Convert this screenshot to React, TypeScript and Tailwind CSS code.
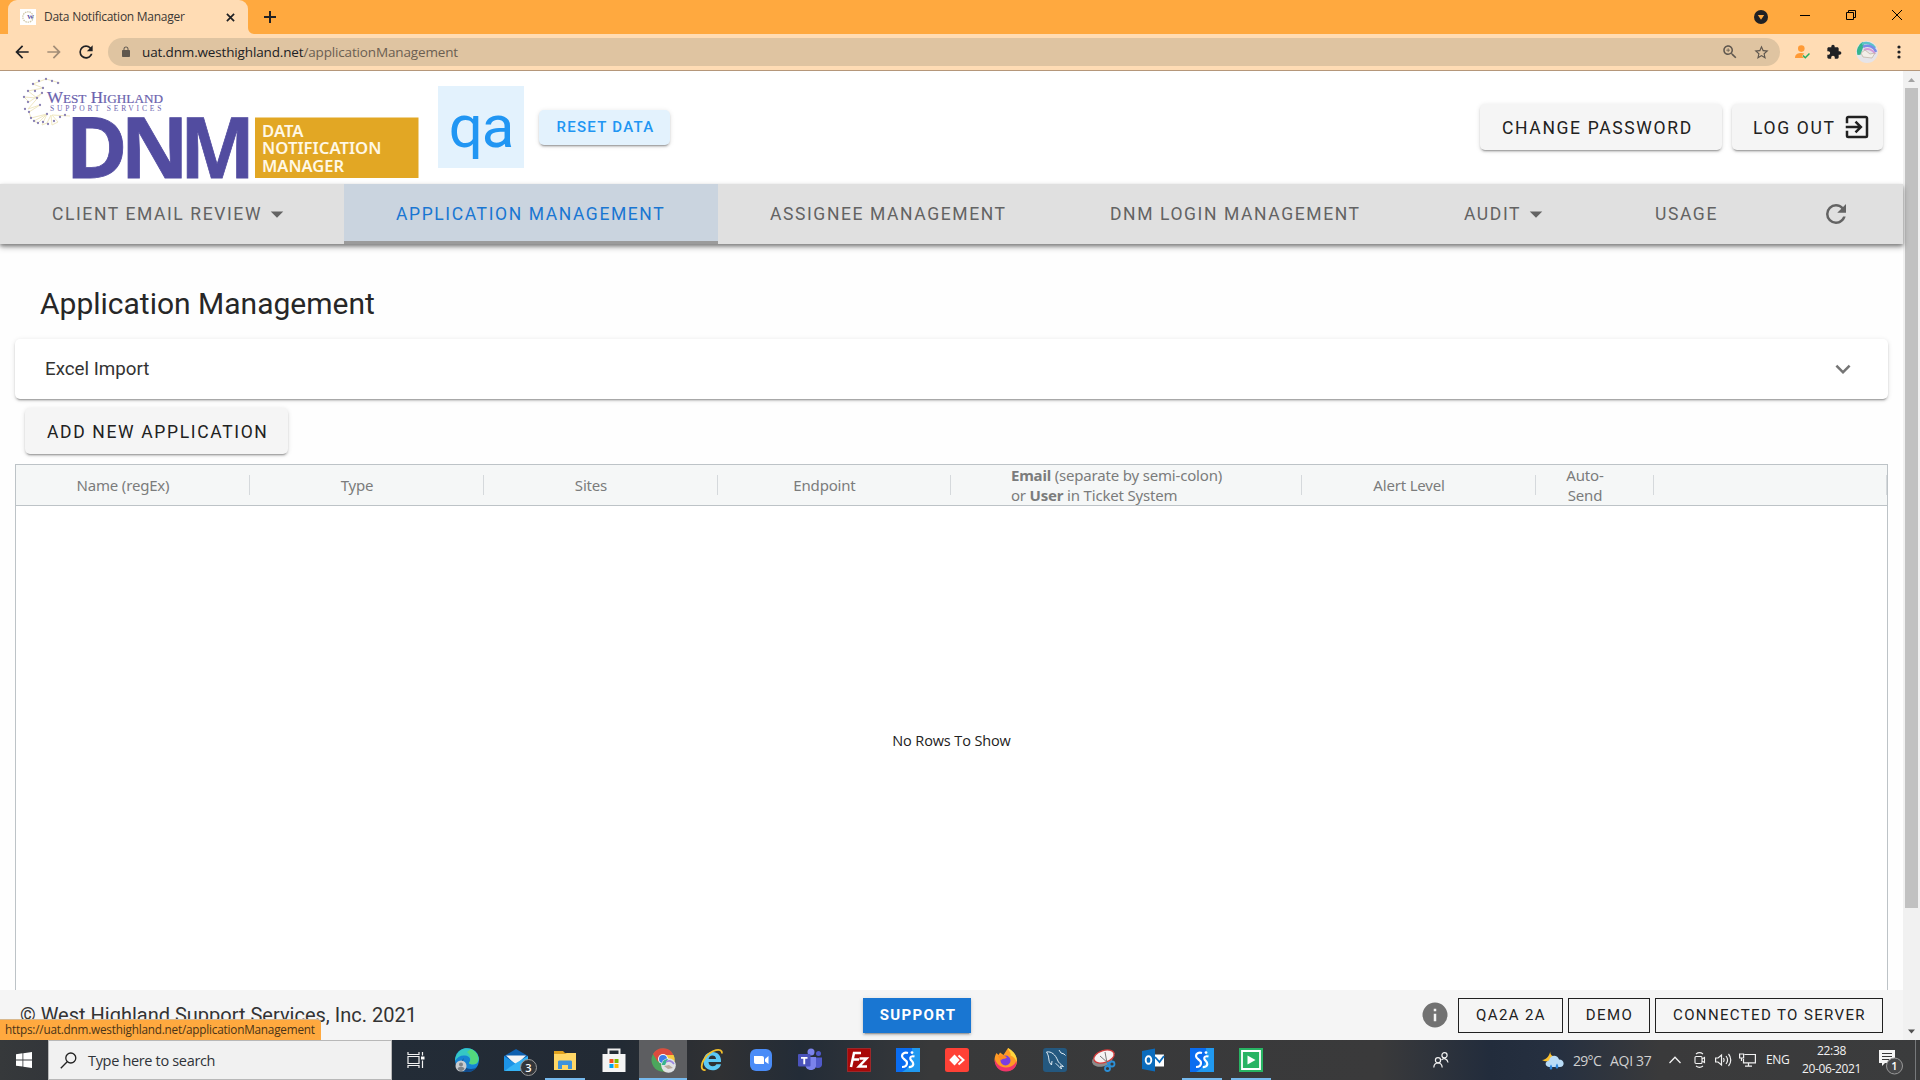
import React from "react";
import type { ReactNode } from "react";

const PATHS = {
  back: "M20 11H7.83l5.59-5.59L12 4l-8 8 8 8 1.41-1.41L7.83 13H20v-2z",
  forward: "M12 4l-1.41 1.41L16.17 11H4v2h12.17l-5.58 5.59L12 20l8-8z",
  refresh:
    "M17.65,6.35C16.2,4.9 14.21,4 12,4A8,8 0 0,0 4,12A8,8 0 0,0 12,20C15.73,20 18.84,17.45 19.73,14H17.65C16.83,16.33 14.61,18 12,18A6,6 0 0,1 6,12A6,6 0 0,1 12,6C13.66,6 15.14,6.69 16.22,7.78L13,11H20V4L17.65,6.35Z",
  lock: "M18 8h-1V6c0-2.76-2.24-5-5-5S7 3.24 7 6v2H6c-1.1 0-2 .9-2 2v10c0 1.1.9 2 2 2h12c1.1 0 2-.9 2-2V10c0-1.1-.9-2-2-2zM8.9 6c0-1.71 1.39-3.1 3.1-3.1s3.1 1.39 3.1 3.1v2H8.9V6z",
  zoomIn:
    "M15.5 14h-.79l-.28-.27C15.41 12.59 16 11.11 16 9.5 16 5.91 13.09 3 9.5 3S3 5.91 3 9.5 5.91 16 9.5 16c1.61 0 3.09-.59 4.23-1.57l.27.28v.79l5 4.99L20.49 19l-4.99-5zm-6 0C7.01 14 5 11.99 5 9.5S7.01 5 9.5 5 14 7.01 14 9.5 11.99 14 9.5 14zm2.5-4h-2v2H9v-2H7V9h2V7h1v2h2v1z",
  star: "M22 9.24l-7.19-.62L12 2 9.19 8.63 2 9.24l5.46 4.73L5.82 21 12 17.27 18.18 21l-1.63-7.03L22 9.24zM12 15.4l-3.76 2.27 1-4.28-3.32-2.88 4.38-.38L12 6.1l1.71 4.04 4.38.38-3.32 2.88 1 4.28L12 15.4z",
  puzzle:
    "M20.5 11H19V7c0-1.1-.9-2-2-2h-4V3.5C13 2.12 11.88 1 10.5 1S8 2.12 8 3.5V5H4c-1.1 0-1.99.9-1.99 2v3.8H3.5c1.49 0 2.7 1.21 2.7 2.7s-1.21 2.7-2.7 2.7H2V20c0 1.1.9 2 2 2h3.8v-1.5c0-1.49 1.21-2.7 2.7-2.7 1.49 0 2.7 1.21 2.7 2.7V22H17c1.1 0 2-.9 2-2v-4h1.5c1.38 0 2.5-1.12 2.5-2.5S21.88 11 20.5 11z",
  exit: "M19,3H5C3.89,3 3,3.89 3,5V9H5V5H19V19H5V15H3V19A2,2 0 0,0 5,21H19A2,2 0 0,0 21,19V5C21,3.89 20.1,3 19,3M10.08,15.58L11.5,17L16.5,12L11.5,7L10.08,8.41L12.67,11H3V13H12.67L10.08,15.58Z",
  caret: "M7,10L12,15L17,10H7Z",
  chevron: "M7.41,8.58L12,13.17L16.59,8.58L18,10L12,16L6,10L7.41,8.58Z",
  info: "M13,9H11V7H13M13,17H11V11H13M12,2A10,10 0 0,0 2,12A10,10 0 0,0 12,22A10,10 0 0,0 22,12A10,10 0 0,0 12,2Z",
};

function Icon({ name, className }: { name: keyof typeof PATHS; className: string }) {
  return (
    <svg viewBox="0 0 24 24" fill="currentColor" className={`shrink-0 ${className}`}>
      <path d={PATHS[name]} />
    </svg>
  );
}

const ELEVATION =
  "shadow-[0_3px_1px_-2px_rgba(0,0,0,.2),0_2px_2px_0_rgba(0,0,0,.14),0_1px_5px_0_rgba(0,0,0,.12)]";

/* ---------- Browser chrome ---------- */

function Favicon() {
  return (
    <svg viewBox="0 0 16 16" className="size-4 shrink-0 bg-white">
      <circle cx="8" cy="8" r="5.2" fill="none" stroke="#cfc7a8" strokeWidth="1.3" strokeDasharray="1.5 .8" />
      <text x="7" y="10.2" fontSize="7" fontWeight="700" fill="#5b52a3" fontFamily="Liberation Serif">W</text>
    </svg>
  );
}

function TabStrip() {
  return (
    <div className="flex h-[34px] items-end bg-[#ffa93f] pl-2">
      <div className="flex h-[34px] w-60 items-center rounded-t-[9px] bg-[#ffdcb4] pr-2.5 pl-3">
        <Favicon />
        <span className="ml-2 flex-1 font-['Open_Sans'] text-[12px] tracking-[-0.26px] whitespace-nowrap text-[#3c3835]">
          Data Notification Manager
        </span>
        <svg viewBox="0 0 10 10" className="mr-[3px] size-[9px] stroke-[#202124]" strokeWidth="1.9">
          <path d="M1 1l8 8M9 1L1 9" />
        </svg>
      </div>
      <svg viewBox="0 0 6 6" className="size-1.5 fill-[#ffdcb4]"><path d="M0 0a6 6 0 0 0 6 6H0z" /></svg>
      <svg viewBox="0 0 12 12" className="mb-[11px] ml-2.5 size-3 stroke-[#202124]" strokeWidth="2">
        <path d="M6 0v12M0 6h12" />
      </svg>
      <div className="ml-auto flex h-[34px] items-center text-black">
        <svg viewBox="0 0 14 14" className="mr-8 size-3.5">
          <circle cx="7" cy="7" r="7" fill="#202124" />
          <path d="M3.8 5h6.4L7 9.8z" fill="#ffa93f" />
        </svg>
        <svg viewBox="0 0 10 10" className="mb-[5px] mr-9 size-2.5 stroke-black"><path d="M0 5.5h10" /></svg>
        <svg viewBox="0 0 10 10" className="mb-[5px] mr-9 size-2.5 fill-none stroke-black">
          <path d="M.5 2.5h7v7h-7zM2.5 2.5v-2h7v7h-2" />
        </svg>
        <svg viewBox="0 0 10 10" className="mb-[5px] mr-[18px] size-2.5 stroke-black"><path d="M0 0l10 10M10 0L0 10" /></svg>
      </div>
    </div>
  );
}

function Toolbar() {
  return (
    <div className="flex h-[37px] items-center border-b border-[#b5977a] bg-[#ffdcb4] pl-3 text-[#202124]">
      <Icon name="back" className="size-5" />
      <Icon name="forward" className="ml-3 size-5 text-[#a28d77]" />
      <Icon name="refresh" className="ml-3 size-5" />
      <div className="ml-3 flex h-7 w-[1672px] items-center rounded-full bg-[#dfc4a1] pr-2.5 pl-3 text-[#5f574e]">
        <Icon name="lock" className="size-3" />
        <span className="ml-[10px] font-['Open_Sans'] text-[13.5px] tracking-[-0.15px] text-[#6b5f52]">
          <span className="text-[#202124]">uat.dnm.westhighland.net</span>/applicationManagement
        </span>
        <Icon name="zoomIn" className="ml-auto size-[18px]" />
        <Icon name="star" className="ml-3.5 size-[17px]" />
      </div>
      <svg viewBox="0 0 15 14" className="ml-[15px] h-3.5 w-[15px]">
        <circle cx="6.3" cy="3.6" r="3.3" fill="#ff9a35" />
        <path d="M0 13c0-4 3-5 6.500-5 1 0 2 .2 2.800.5L7 11l2 2z" fill="#ff9a35" />
        <path d="M8 10.500l2.300 2.300L14.500 8.500" fill="none" stroke="#27ae60" strokeWidth="1.500" />
      </svg>
      <Icon name="puzzle" className="ml-4 size-4" />
      <svg viewBox="0 0 22 22" className="mb-px ml-3.5 size-[22px]">
        <circle cx="11" cy="11" r="11" fill="#e6e4e8" />
        <path d="M1.500 14A11 11 0 0 1 7 .8l1 3-3.500 10z" fill="#35b48e" />
        <path d="M6 3a10 10 0 0 1 13 4" fill="none" stroke="#5cc3c9" strokeWidth="2.500" />
        <path d="M7 6a9 9 0 0 1 13 5" fill="none" stroke="#7b8be8" strokeWidth="2.500" />
        <path d="M8 9a8 8 0 0 1 11 4" fill="none" stroke="#d69ad8" strokeWidth="2" />
        <path d="M5 12l4-3 5 4 5-1-3 5-9-1z" fill="#f3eee8" stroke="#b5a696" strokeWidth=".6" />
      </svg>
      <svg viewBox="0 0 4 14" className="ml-[19px] h-3.5 w-1 fill-[#202124]">
        <circle cx="2" cy="2" r="1.600" /><circle cx="2" cy="7" r="1.600" /><circle cx="2" cy="12" r="1.600" />
      </svg>
    </div>
  );
}

/* ---------- Page ---------- */

const DOTS = [
  [39, 10], [46, 8], [52, 10], [58, 12], [33, 13], [28, 20], [24, 26], [28, 31], [37, 27], [43, 17], [42, 22],
  [25, 38], [29, 41], [40, 34], [31, 47], [34, 50], [38, 52], [43, 51], [48, 53], [54, 50], [60, 46], [65, 44], [47, 43], [35, 20],
];

function Logo() {
  return (
    <svg viewBox="0 0 420 113" className="h-[113px] w-[420px] shrink-0 overflow-visible">
      <path
        d="M60 12L46 8 33 13l10 4-15 3 9 7-13-1 5 5 13-9-14 16 12-4-11 7 2 6 16-4-13 7 4 2 9-9-5 11 5-2 4-8 1 10 6-3-6-7 18 1"
        fill="none" stroke="#f0e8c2" strokeWidth="1"
      />
      <g fill="#8a82b4">
        {DOTS.map(([x, y]) => <circle key={`${x}-${y}`} cx={x} cy={y} r="1.150" />)}
      </g>
      <g fill="#6b63ae" fontFamily="Liberation Serif">
        <text x="47" y="31.500" fontSize="16" stroke="#6b63ae" strokeWidth=".2" textLength="116" lengthAdjust="spacingAndGlyphs">
          W<tspan fontSize="12.500">EST</tspan> H<tspan fontSize="12.500">IGHLAND</tspan>
        </text>
        <text x="50" y="39.500" fontSize="7.500" letterSpacing="2.700" textLength="114">SUPPORT SERVICES</text>
      </g>
      <g fill="#524ca0" fontFamily="Open Sans" fontWeight="700" fontSize="84" stroke="#524ca0" strokeWidth=".8">
        <text x="65.500" y="107.300">D</text>
        <text x="120.500" y="107.300">N</text>
        <text x="180" y="107.300" textLength="75" lengthAdjust="spacingAndGlyphs">M</text>
      </g>
      <rect x="255" y="46.500" width="163.500" height="60.500" fill="#e2a724" />
      <g fill="#fff8e6" fontFamily="Noto Sans" fontWeight="600" fontSize="16.500">
        <text x="262" y="65.800" textLength="41.500" lengthAdjust="spacingAndGlyphs">DATA</text>
        <text x="262" y="83.300" textLength="119.500" lengthAdjust="spacingAndGlyphs">NOTIFICATION</text>
        <text x="262" y="101" textLength="82" lengthAdjust="spacingAndGlyphs">MANAGER</text>
      </g>
    </svg>
  );
}

function RaisedButton({ className, children }: { className: string; children: ReactNode }) {
  return (
    <button
      className={`flex h-[46px] items-center rounded-[5px] bg-[#f5f5f5] pt-0.5 text-[17.5px] tracking-[1.65px] whitespace-nowrap text-[#212121] ${ELEVATION} ${className}`}
    >
      {children}
    </button>
  );
}

function Header() {
  return (
    <header className="flex h-[113px] items-start bg-white">
      <Logo />
      <div className="mt-[15px] ml-[18px] flex h-[82px] w-[86px] items-center justify-center bg-[#e3f2fd] text-[60px] tracking-[-1px] text-[#2196f3]">
        qa
      </div>
      <button
        className={`mt-[39px] ml-[15px] h-[35px] w-[131px] rounded-[5px] bg-[#e3f2fd] pl-0.5 text-[15px] font-medium tracking-[1.3px] text-[#2196f3] ${ELEVATION}`}
      >
        RESET DATA
      </button>
      <div className="mt-[33px] mr-5 ml-auto flex gap-2.5">
        <RaisedButton className="w-[242px] pl-[22px]">CHANGE PASSWORD</RaisedButton>
        <RaisedButton className="w-[151px] pl-[21px]">
          LOG OUT
          <Icon name="exit" className="mb-0.5 ml-1.5 size-[30px]" />
        </RaisedButton>
      </div>
    </header>
  );
}

function NavItem({ className, children }: { className: string; children: ReactNode }) {
  return (
    <div className={`flex h-full shrink-0 items-center whitespace-nowrap ${className}`}>{children}</div>
  );
}

function Nav() {
  return (
    <nav className="relative z-10 flex h-[60px] bg-[#e0e0e0] text-[17.5px] tracking-[1.6px] text-[#636363] shadow-[0_3px_6px_rgba(0,0,0,.35),0_2px_3px_rgba(0,0,0,.25)]">
      <NavItem className="w-[344px] pl-[52px]">
        CLIENT EMAIL REVIEW
        <Icon name="caret" className="size-[30px]" />
      </NavItem>
      <NavItem className="w-[374px] border-b-[3px] border-[#9b9b9b] bg-[#cad4df] pt-[3px] pl-[52px] text-[#1976d2]">
        APPLICATION MANAGEMENT
      </NavItem>
      <NavItem className="w-[340px] pl-[52px]">ASSIGNEE MANAGEMENT</NavItem>
      <NavItem className="w-[354px] pl-[52px]">DNM LOGIN MANAGEMENT</NavItem>
      <NavItem className="w-[191px] pl-[52px]">
        AUDIT
        <Icon name="caret" className="size-[30px]" />
      </NavItem>
      <NavItem className="w-[167px] pl-[52px]">USAGE</NavItem>
      <NavItem className="pl-[51px]">
        <Icon name="refresh" className="size-[30px]" />
      </NavItem>
    </nav>
  );
}

const COLUMNS: { id: string; className: string; label: ReactNode }[] = [
  { id: "name", className: "w-[234px]", label: "Name (regEx)" },
  { id: "type", className: "w-[234px]", label: "Type" },
  { id: "sites", className: "w-[234px]", label: "Sites" },
  { id: "endpoint", className: "w-[233px]", label: "Endpoint" },
  {
    id: "email",
    className: "w-[351px]",
    label: (
      <>
        <b>Email</b> (separate by semi-colon)
        <br />
        or <b>User</b> in Ticket System
      </>
    ),
  },
  { id: "alert", className: "w-[234px]", label: "Alert Level" },
  { id: "auto", className: "w-[118px]", label: <span className="block text-center">Auto-<br />Send</span> },
  { id: "actions", className: "w-[233px]", label: "" },
];

function ApplicationsGrid() {
  return (
    <section className="mt-[10px] ml-[15px] flex w-[1873px] flex-1 flex-col border-x border-t border-[#bdc3c7] font-['Noto_Sans']">
      <div className="flex h-[41px] items-center border-b border-[#bdc3c7] bg-[#f5f7f7]">
        {COLUMNS.map((c) => (
          <div key={c.id} className={`flex shrink-0 items-center ${c.className}`}>
            <div className="-my-1 flex flex-1 justify-center pr-[19px] text-[15px] leading-5 tracking-[-0.18px] whitespace-nowrap text-[#7b7c7c]">
              <div>{c.label}</div>
            </div>
            <div className="h-5 w-px bg-[#d5d9dc]" />
          </div>
        ))}
      </div>
      <div className="flex flex-1 items-center justify-center bg-white pb-[15px]">
        <span className="font-['Open_Sans'] text-[14.5px] tracking-[-0.12px] text-[#222]">No Rows To Show</span>
      </div>
    </section>
  );
}

function Chip({ className, children }: { className: string; children: ReactNode }) {
  return (
    <div className={`flex h-[35px] items-center justify-center border border-[#212121] pl-px text-[15px] tracking-[1.37px] whitespace-nowrap text-[#212121] ${className}`}>
      {children}
    </div>
  );
}

function Footer() {
  return (
    <footer className="flex h-[50px] shrink-0 items-center bg-[#f5f5f5] pr-5 pl-5">
      <span className="w-[843px] text-[20px] text-[#333]">© West Highland Support Services, Inc. 2021</span>
      <button className={`h-[35px] w-[108px] bg-[#1976d2] pl-0.5 text-[15px] font-bold tracking-[1.34px] text-white ${ELEVATION}`}>
        SUPPORT
      </button>
      <Icon name="info" className="mr-2 ml-auto size-[30px] text-[#727272]" />
      <Chip className="w-[105px]">QA2A 2A</Chip>
      <Chip className="ml-[5px] w-[82px]">DEMO</Chip>
      <Chip className="ml-[5px] w-[228px]">CONNECTED TO SERVER</Chip>
    </footer>
  );
}

function Scrollbar() {
  return (
    <div className="flex w-[17px] flex-col items-center bg-[#f1f1f1]">
      <svg viewBox="0 0 17 17" className="size-[17px]"><path d="M5 11h7L8.500 7z" fill="#a3a3a3" /></svg>
      <div className="h-[820px] w-[13px] bg-[#c1c1c1]" />
      <svg viewBox="0 0 17 17" className="mt-auto size-[17px]"><path d="M5 6.500h7l-3.500 4z" fill="#505050" /></svg>
    </div>
  );
}

/* ---------- Taskbar ---------- */

function StreamIcon() {
  return (
    <>
      <path d="M0 0h24v24H0z" fill="#0a6cf0" /><path d="M24 0v24H6c8-4 11-12 10-24z" fill="#25a5f0" opacity=".8" />
      <path d="M12 5C8.500 4 6 5.500 6 8c0 3.500 5 3.500 5 7 0 2.500-2 4-5 4" fill="none" stroke="#fff" strokeWidth="2.200" />
      <path d="M18.500 8.500c-3-.8-4.500.5-4.200 2.200.4 2.300 3.400 2.800 3 5.500-.3 2-2 3-4.500 2.800" fill="none" stroke="#fff" strokeWidth="2.200" />
      <circle cx="16" cy="4.600" r="1.400" fill="#fff" />
    </>
  );
}

const APPS: { id: string; art: ReactNode; state?: string }[] = [
  {
    id: "taskview",
    art: (
      <g fill="none" stroke="#f2f2f2" strokeWidth="1.200">
        <path d="M2 8.500h11v7H2zM2 4v2.500h11V4M2 20v-2.500h11V20M16.500 4v3.500M16.500 12.500V20" />
        <path d="M15 8.500h3.500v3H15z" fill="#fff" stroke="none" />
      </g>
    ),
  },
  {
    id: "edge",
    art: (
      <>
        <circle cx="12" cy="12" r="12" fill="#1683d3" />
        <path d="M1 8C4 0 13-2 19 2.500c5 4 6.500 10 2.500 13-2 1.500-7 1.300-7.500-.5 2.500-3 1-7-4-7.500C6 7 2 9 0 13c0-2 .3-3.500 1-5z" fill="#35c7c5" />
        <path d="M16 1c6 2.500 9.500 9.500 6 14-2 2-8 1.500-8 0 3-4 1-9-2-11z" fill="#5bdc6a" opacity=".8" />
        <path d="M9 10c-3 5 0 11 7 11 2.500 0 4.500-.7 6-2-3 4-7 5.500-12 4.800C5 22 5 13 9 10z" fill="#114a8b" />
        <circle cx="6" cy="18" r="5.500" fill="#c9ccd0" /><circle cx="6" cy="16.500" r="2" fill="#7d8288" />
        <path d="M2.500 21c.5-3 6.500-3 7 0-2 2.500-5 2.500-7 0z" fill="#7d8288" />
      </>
    ),
  },
  {
    id: "mail",
    art: (
      <>
        <path d="M0 8L12 1l12 7v14H0z" fill="#0e5fae" /><path d="M2 7.500h20L12 17z" fill="#f4f4f4" />
        <path d="M0 8l12 8L0 23z" fill="#1c93e6" /><path d="M0 23l12-8 12-7v15z" fill="#35b3f5" />
        <circle cx="24.500" cy="19.500" r="8" fill="#33363a" stroke="#9a9a9a" />
        <text x="24.500" y="23.500" textAnchor="middle" fontSize="11" fontWeight="600" fill="#fff" fontFamily="Open Sans">3</text>
      </>
    ),
  },
  {
    id: "explorer",
    state: "open",
    art: (
      <>
        <path d="M1 3h9l2 2h11v17H1z" fill="#e0a21e" /><path d="M1 8V6h11l2-1h9v17H1z" fill="#ffd766" />
        <path d="M5 21v-7c0-1 .6-1.500 1.500-1.500h11c1 0 1.500.5 1.500 1.500v7h-4v-4H9v4z" fill="#3f93dc" />
      </>
    ),
  },
  {
    id: "store",
    art: (
      <>
        <path d="M6.500 7V1.500h11V7" fill="none" stroke="#eee" strokeWidth="2" /><path d="M.5 6h23v18h-23z" fill="#f4f4f4" />
        <path d="M7.500 11h4v4h-4z" fill="#f25022" /><path d="M12.500 11h4v4h-4z" fill="#7fba00" />
        <path d="M7.500 16h4v4h-4z" fill="#00a4ef" /><path d="M12.500 16h4v4h-4z" fill="#ffb900" />
      </>
    ),
  },
  {
    id: "chrome",
    state: "active",
    art: (
      <>
        <circle cx="12" cy="12" r="11.500" fill="#4ca65c" />
        <path d="M2 6a11.500 11.500 0 0 1 20.500 1H12l-5 7z" fill="#dc4b3e" /><path d="M12 7h10.600a11.500 11.500 0 0 1-10 16.500l5-8z" fill="#f7c93e" />
        <circle cx="12" cy="11" r="5" fill="#fff" /><circle cx="12" cy="11" r="4" fill="#3e7ce8" />
        <circle cx="17.500" cy="17.500" r="7.300" fill="#dfe2e4" /><path d="M11 17c0-4 3-6 6-6l-3 6z" fill="#35b48e" />
        <path d="M15 14c3-2 6-1 8 2" fill="none" stroke="#9a86e0" strokeWidth="1.500" /><path d="M13 18l5-1 4 3-5 1z" fill="#b9a99a" />
      </>
    ),
  },
  {
    id: "ie",
    art: (
      <>
        <path d="M21 14H8.500c.3 3 2 4.300 4.300 4.300 1.800 0 3-.8 3.600-2H21c-1.200 4-4.400 6-8.500 6-5.500 0-9-3.500-9-9s3.500-9.300 9-9.300 9 4 8.500 10zM8.600 11h7.500c-.3-2.300-1.600-3.400-3.700-3.400S9 8.800 8.600 11z" fill="#5cc9f5" />
        <path d="M22 5.500C22.500-1 11 1.500 5 10c-4.500 6-4.500 13 .5 12" fill="none" stroke="#f2bf2a" strokeWidth="1.800" />
      </>
    ),
  },
  {
    id: "zoom",
    art: (
      <>
        <rect x="1" y="1" width="22" height="22" rx="6" fill="#4a8cf7" />
        <path d="M5 8h8c1.200 0 2 .8 2 2v6H7c-1.200 0-2-.8-2-2zM16 11l3.500-3v8L16 13.500z" fill="#fff" />
      </>
    ),
  },
  {
    id: "teams",
    art: (
      <>
        <circle cx="13" cy="4" r="3.500" fill="#7b83eb" /><circle cx="20.500" cy="5.500" r="2.500" fill="#5059c9" />
        <path d="M16 9.500h8v7c0 3-4 4.500-7 2.500z" fill="#5059c9" /><path d="M8 9h10v8.500c0 6-10 6-10.500 0z" fill="#7b83eb" />
        <rect x="0" y="6" width="12.500" height="12.500" rx="1" fill="#4b53bc" /><path d="M3 9h6.500v1.800H7.200v5.500H5.300v-5.500H3z" fill="#fff" />
      </>
    ),
  },
  {
    id: "filezilla",
    art: (
      <>
        <path d="M.5.500h23v23H.5z" fill="#a80808" stroke="#d03434" strokeDasharray="1 1" />
        <path d="M14 5H7L4 19M6 11.500h6M12.500 10.500h7l-7.500 8h8" fill="none" stroke="#fff" strokeWidth="2.500" />
      </>
    ),
  },
  { id: "stream", art: <StreamIcon /> },
  {
    id: "anydesk",
    art: (
      <>
        <rect width="24" height="24" rx="2.500" fill="#ff4136" /><path d="M9.500 6.500l5.200 5.500-5.200 5.500L4.200 12z" fill="#fff" />
        <path d="M13.500 7.500l5 4.500-5 4.500" fill="none" stroke="#fff" strokeWidth="2" />
      </>
    ),
  },
  {
    id: "firefox",
    art: (
      <>
        <path d="M2.500 5l2 2 1.500-2.500L9.500 7 14 0c2 1 3 3 3.500 5l1.500-1c4.500 5 5.500 11 1.500 15.500-4.500 5-13 4.500-17-.5S0 9.500 2.500 5z" fill="#ff9a25" />
        <path d="M1 11c1 5 6 9 11.500 8.500S22 16 22.500 12c1 6-3 11.500-10.500 11.500S-.5 17 1 11z" fill="#f0356a" />
        <path d="M14 0c6 3 10 9 8.500 14-1-4-4-6-6-6.500C17.500 4 14 3 14 0z" fill="#ffd63e" />
        <circle cx="11.500" cy="12.500" r="5" fill="#7a3ee0" /><path d="M4 8c3-1.500 7-.5 9 1.500-2 2-5 .5-6 3z" fill="#ff8a20" />
      </>
    ),
  },
  {
    id: "mysql",
    art: (
      <>
        <rect width="24" height="24" rx="3" fill="#24587f" />
        <path d="M3.500 4c5-1 9 3 11 8 1 3 3 4 6 6.500l-3-.5 1 3c-3-3-5-5-6-5.500M3.500 4c2 3 2 5 2.500 8 0 2 1.500 4 2.500 5l.5-4M16 2l2 3 3 1 1.500 1.500" fill="none" stroke="#dce9f2" strokeWidth="1" />
      </>
    ),
  },
  {
    id: "snip",
    art: (
      <>
        <ellipse cx="10.500" cy="12" rx="10.500" ry="6.500" fill="#8c8c8c" transform="rotate(-15 10 13)" />
        <ellipse cx="12" cy="8.500" rx="10.500" ry="6" fill="#f6f3f3" stroke="#d53b3b" strokeWidth="1.300" transform="rotate(-18 12 8.500)" />
        <path d="M13 4l2 11M8 8l8 7" stroke="#777" /><g fill="none" stroke="#2c8fd6" strokeWidth="1.800"><circle cx="20" cy="16" r="2.500" /><circle cx="15.500" cy="20.500" r="2.500" /><path d="M16 14v4" /></g>
      </>
    ),
  },
  {
    id: "outlook",
    art: (
      <>
        <path d="M13 6.500h10v12H13z" fill="#fff" /><path d="M14 9l4.500 5L23 8" fill="none" stroke="#0b6cbd" strokeWidth="1.800" />
        <path d="M1 3l13-2.500v23L1 21z" fill="#0b6cbd" /><ellipse cx="7.500" cy="12" rx="2.800" ry="3.800" fill="none" stroke="#fff" strokeWidth="1.900" />
      </>
    ),
  },
  { id: "stream-2", state: "open", art: <StreamIcon /> },
  {
    id: "player",
    state: "open",
    art: (
      <>
        <path d="M0 0h24v24H0z" fill="#28b463" /><path d="M3 3h18v18H3z" fill="none" stroke="#fff" strokeWidth="1.800" />
        <path d="M8.500 7.500l8 4.500-8 4.500z" fill="#fff" />
      </>
    ),
  },
];

function AppButton({ state, art }: { state?: string; art: ReactNode }) {
  const tone = state === "active" ? "bg-[#5d5e61]" : "";
  return (
    <div className={`flex h-10 w-12 shrink-0 flex-col items-center pt-2 ${tone}`}>
      <svg viewBox="0 0 24 24" className="size-6 overflow-visible">{art}</svg>
      {state && <div className={`mt-auto h-0.5 bg-[#76b9ed] ${state === "active" ? "w-12" : "w-10"}`} />}
    </div>
  );
}

function Tray() {
  return (
    <div className="ml-auto flex h-10 items-center font-['Open_Sans'] text-[#f2f2f2]">
      <svg viewBox="0 0 16 16" className="mr-[93px] size-4 fill-none stroke-[#f2f2f2]" strokeWidth="1.200">
        <circle cx="5" cy="8.300" r="2.600" /><path d="M.8 15.500c.3-6 8-6 8.400 0" />
        <circle cx="11.500" cy="3.300" r="2.600" /><path d="M8.500 8c2-2.500 6-1.500 6.500 2.500" />
      </svg>
      <svg viewBox="0 0 22 21" className="h-[21px] w-[22px]">
        <path d="M8.500 0c-1 4 1 6.500 5 6.500-2 5-10 6-13.500 3.500C5 9.500 8 5 8.500 0z" fill="#fbc02d" />
        <path d="M7 17c-5-1-4-6 0-6.500C8 4 16 4.500 17 9.500c6 0 6 7.500 1 7.500z" fill="#b9dcf7" />
        <path d="M9 14.500c2 3 1.500 5 0 5S7 17.500 9 14.500zM15 13.500c2 3 1.500 5 0 5s-2-2 0-5z" fill="#2f86db" />
      </svg>
      <span className="ml-[9px] w-[37px] text-[14px] tracking-[-0.7px] whitespace-nowrap text-[#d0d0d0]">29°C</span>
      <span className="w-[59px] text-[14px] tracking-[-0.3px] whitespace-nowrap text-[#d0d0d0]">AQI 37</span>
      <svg viewBox="0 0 12 8" className="h-2 w-3 fill-none stroke-[#f2f2f2]" strokeWidth="1.300"><path d="M.5 7L6 1.300 11.500 7" /></svg>
      <svg viewBox="0 0 12 16" className="ml-[13px] h-4 w-3 fill-none stroke-[#f2f2f2]" strokeWidth="1.100">
        <rect x="1" y="4.500" width="7" height="7" rx="1" /><path d="M8 7l2.500-1.500v5L8 9M2 2c2-1.500 5-1.500 7 0M2 14c2 1.500 5 1.500 7 0" />
      </svg>
      <svg viewBox="0 0 17 14" className="ml-[9px] h-3.5 w-[17px] fill-none stroke-[#f2f2f2]" strokeWidth="1.200">
        <path d="M.6 5h2.500L6.500 2v10L3 9H.6zM8.500 5c1 1.500 1 2.500 0 4M11 3c2 2.500 2 5.500 0 8M13.500 1c3 3.500 3 8.500 0 12" />
      </svg>
      <svg viewBox="0 0 17 14" className="ml-[7px] h-3.5 w-[17px] fill-none stroke-[#f2f2f2]" strokeWidth="1.200">
        <path d="M5.500 1.500h10.900v8.400H4.500V6M9.500 10v3M6 13.200h7M.6 1h4v4h-4zM2.500 5v3" />
      </svg>
      <span className="ml-[10px] w-[24px] text-[12px] tracking-[-0.3px]">ENG</span>
      <div className="ml-3 w-[59px] text-center text-[12px] leading-[18px] tracking-[-0.35px] whitespace-nowrap">
        22:38<br />20-06-2021
      </div>
      <svg viewBox="0 0 26 26" className="mt-1 ml-[17px] size-[26px]">
        <path d="M1 1h16v13H7l-3 3v-3H1z" fill="#f5f5f5" /><path d="M4 4.500h10M4 7.500h10M4 10.500h7" stroke="#3a3a3a" />
        <circle cx="16.500" cy="17" r="8" fill="#47484a" stroke="#999" />
        <text x="16.500" y="21" textAnchor="middle" fontSize="11" fontWeight="600" fill="#fff">1</text>
      </svg>
      <div className="ml-[11px] h-10 w-px bg-[#77797b]" />
      <div className="w-1" />
    </div>
  );
}

function Taskbar() {
  return (
    <div className="flex h-10 items-center bg-[linear-gradient(90deg,#36393b_0px,#33363a_48px,#232c37_390px,#222a34_620px,#303133_720px,#232c37_800px,#38393a_930px,#3a3a3b_1380px,#222c3c_1490px,#263040_1560px,#3a3a3b_1660px,#3b3c3d_1920px)]">
      <div className="flex w-12 shrink-0 justify-center">
        <svg viewBox="0 0 16 16" className="size-4 fill-white">
          <path d="M0 2.200l6.500-.9v6.200H0zM7.300 1.200L16 0v7.500H7.300zM0 8.400h6.500v6.200L0 13.800zM7.300 8.400H16V16l-8.700-1.200z" />
        </svg>
      </div>
      <div className="flex h-10 w-[344px] shrink-0 items-center border border-[#b8b8b8] bg-[#f1f1f1] pl-[11px]">
        <svg viewBox="0 0 17 17" className="size-[17px] fill-none stroke-[#222]" strokeWidth="1.300">
          <circle cx="10.800" cy="6" r="5" /><path d="M7.200 9.800L.8 16.200" />
        </svg>
        <span className="ml-[11px] pt-0.5 font-['Open_Sans'] text-[14.5px] tracking-[-0.33px] text-[#2f3338]">Type here to search</span>
      </div>
      <div className="ml-0.5 flex gap-px">
        {APPS.map((a) => <AppButton key={a.id} state={a.state} art={a.art} />)}
      </div>
      <Tray />
    </div>
  );
}

export default function App() {
  return (
    <div className="flex h-[1080px] w-[1920px] flex-col overflow-hidden bg-white font-['Roboto',sans-serif]">
      <TabStrip />
      <Toolbar />
      <div className="relative flex h-[969px]">
        <div className="flex w-[1903px] flex-col bg-[#fefefe]">
          <Header />
          <Nav />
          <main className="flex flex-1 flex-col">
            <h1 className="mt-[39px] ml-10 text-[30px] leading-[42px] text-[#272727]">Application Management</h1>
            <div className={`mt-[14px] ml-[15px] flex h-[60px] w-[1873px] items-center justify-between rounded-[5px] bg-white pr-[30px] pl-[30px] text-[18.75px] text-[#333] ${ELEVATION}`}>
              Excel Import
              <Icon name="chevron" className="size-[30px] text-[#757575]" />
            </div>
            <RaisedButton className="mt-[9px] ml-[25px] w-[263px] pl-[22px]">ADD NEW APPLICATION</RaisedButton>
            <ApplicationsGrid />
          </main>
          <Footer />
        </div>
        <Scrollbar />
        <div className="absolute bottom-0 left-0 z-20 flex h-[21px] w-[321px] items-center rounded-tr-[4px] border-t border-[#d9b98e] bg-[#ffa93f] pl-[5px] font-['Open_Sans'] text-[11.75px] tracking-[-0.21px] whitespace-nowrap text-[#4a3418]">
          https://uat.dnm.westhighland.net/applicationManagement
        </div>
      </div>
      <Taskbar />
    </div>
  );
}
